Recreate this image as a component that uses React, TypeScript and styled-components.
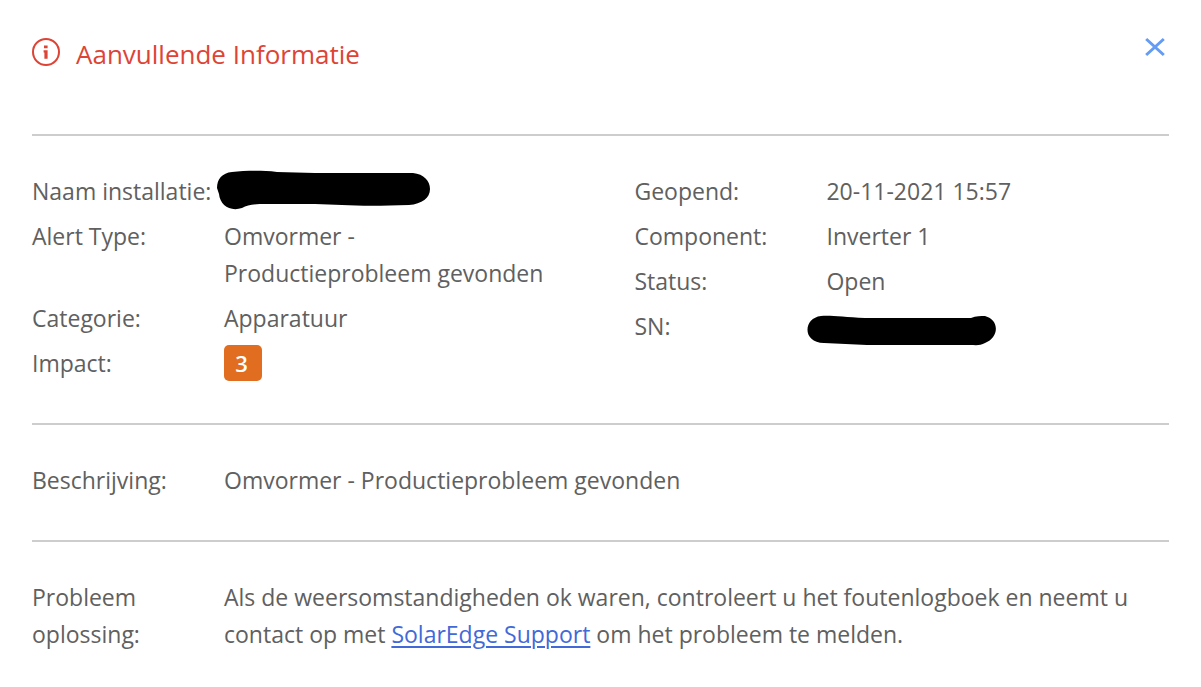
import React from 'react';
import styled, { createGlobalStyle } from 'styled-components';

const GlobalStyle = createGlobalStyle`
  * { box-sizing: border-box; }
  body {
    margin: 0;
    background: #fff;
    color: #606060;
    font-family: "Open Sans", "Segoe UI", sans-serif;
    font-size: 23px;
    line-height: 37px;
  }
`;

const Dialog = styled.main`
  padding: 32px 32px 0;
`;

const Header = styled.header`
  display: flex;
  align-items: flex-start;
  justify-content: space-between;
  height: 102px;
`;

const Heading = styled.div`
  display: flex;
  gap: 16px;
  padding-top: 4px;
  color: #dd4436;

  svg { margin-top: 2px; }
`;

const Title = styled.h1`
  margin: 0;
  font-size: 26px;
  font-weight: 400;
  line-height: 37px;
`;

const CloseButton = styled.button`
  display: flex;
  padding: 5px 4px;
  border: 0;
  background: none;
  color: #649bf5;
  cursor: pointer;
`;

const Section = styled.section`
  display: grid;
  grid-template-columns: 603fr 535fr;
  padding: 37px 0 41px;
  border-top: 2px solid #cdcdcd;

  &:last-of-type { padding-bottom: 28px; }
`;

const WideSection = styled(Section)`
  grid-template-columns: 1fr;
`;

const Details = styled.dl`
  display: flex;
  flex-direction: column;
  gap: 8px;
  margin: 0;
`;

const Row = styled.div`
  display: grid;
  grid-template-columns: 192px 1fr;
`;

const Label = styled.dt`
  margin: 0;
`;

const Value = styled.dd<{ $narrow?: boolean }>`
  position: relative;
  margin: 0;
  max-width: ${({ $narrow }) => ($narrow ? '340px' : 'none')};
`;

const Redaction = styled.svg<{ $shift: number }>`
  position: absolute;
  top: -4px;
  left: ${({ $shift }) => -$shift}px;
`;

const Badge = styled.span`
  display: block;
  width: 38px;
  padding-right: 3px;
  border-radius: 5px;
  background: #e06d20;
  color: #fff;
  font-size: 22px;
  font-weight: 600;
  line-height: 36px;
  text-align: center;
`;

const SupportLink = styled.a`
  color: #4269d8;
  text-decoration: underline;
  text-decoration-thickness: 2px;
  text-underline-offset: 3px;
`;

const InfoIcon = () => (
  <svg width="28" height="28" viewBox="0 0 28 28" aria-hidden="true">
    <circle cx="14" cy="14" r="13" fill="none" stroke="currentColor" strokeWidth="2" />
    <path d="M12 7.5h3.6v2.8H12zM11.6 12.2h4v8.6h-3.2v-6.4h-.8z" fill="currentColor" />
  </svg>
);

const CloseIcon = () => (
  <svg width="20" height="20" viewBox="0 0 20 20" aria-hidden="true">
    <path d="M1.2 2L18.8 18M18.8 2L1.2 18" fill="none" stroke="currentColor" strokeWidth="3" />
  </svg>
);

export default function App() {
  return (
    <>
      <GlobalStyle />
      <Dialog>
        <Header>
          <Heading>
            <InfoIcon />
            <Title>Aanvullende Informatie</Title>
          </Heading>
          <CloseButton type="button" aria-label="Sluiten">
            <CloseIcon />
          </CloseButton>
        </Header>
        <Section>
          <Details>
            <Row>
              <Label>Naam installatie:</Label>
              <Value>
                <Redaction $shift={7} width="214" height="42" viewBox="0 0 214 42" aria-hidden="true">
                  <path d="M0 19C0 10 5 4 15 3C27 2 42 1 60 3L98 4H196C207 5 213 12 213 20C213 29 205 35 192 36C165 37 143 37 125 36L98 35H50C36 35 31 36 25 39C13 43 3 36 2 25Z" />
                </Redaction>
              </Value>
            </Row>
            <Row>
              <Label>Alert Type:</Label>
              <Value $narrow>Omvormer - Productieprobleem gevonden</Value>
            </Row>
            <Row>
              <Label>Categorie:</Label>
              <Value>Apparatuur</Value>
            </Row>
            <Row>
              <Label>Impact:</Label>
              <Value><Badge>3</Badge></Value>
            </Row>
          </Details>
          <Details>
            <Row>
              <Label>Geopend:</Label>
              <Value>20-11-2021 15:57</Value>
            </Row>
            <Row>
              <Label>Component:</Label>
              <Value>Inverter 1</Value>
            </Row>
            <Row>
              <Label>Status:</Label>
              <Value>Open</Value>
            </Row>
            <Row>
              <Label>SN:</Label>
              <Value>
                <Redaction $shift={19} width="190" height="42" viewBox="0 0 190 42" aria-hidden="true">
                  <path d="M14 12C23 11 36 13 58 14H164C169 12 174 12 178 12C193 16 192 34 178 39C173 42 168 41 163 41H60L17 39C-5 39-4 14 14 12Z" />
                </Redaction>
              </Value>
            </Row>
          </Details>
        </Section>
        <WideSection>
          <Details>
            <Row>
              <Label>Beschrijving:</Label>
              <Value>Omvormer - Productieprobleem gevonden</Value>
            </Row>
          </Details>
        </WideSection>
        <WideSection>
          <Details>
            <Row>
              <Label>Probleem oplossing:</Label>
              <Value>
                Als de weersomstandigheden ok waren, controleert u het foutenlogboek en neemt u
                contact op met <SupportLink href="#support">SolarEdge Support</SupportLink> om het
                probleem te melden.
              </Value>
            </Row>
          </Details>
        </WideSection>
      </Dialog>
    </>
  );
}
